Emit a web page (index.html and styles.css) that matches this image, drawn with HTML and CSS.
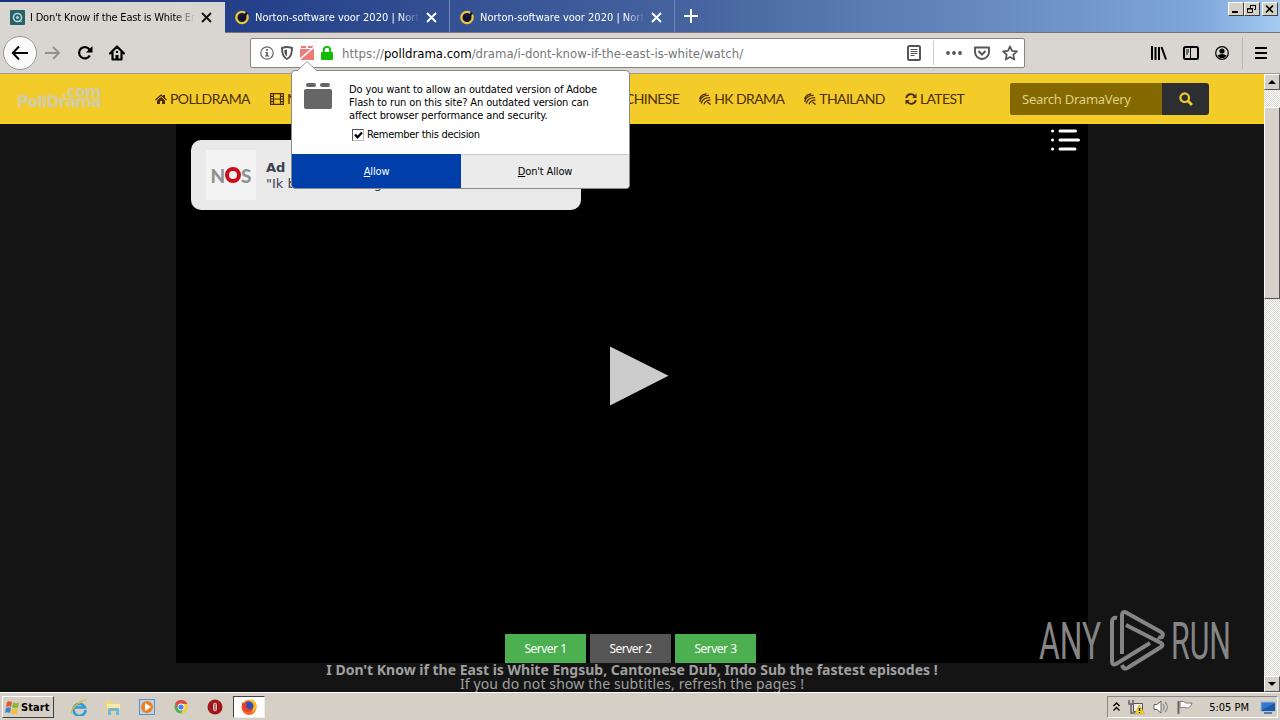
FILE: index.html
```html
<!DOCTYPE html>
<html lang="en">
<head>
    <meta charset="UTF-8">
    <meta name="viewport" content="width=device-width, initial-scale=1.0">
    <title>I Don't Know if the East is White</title>
    <link rel="stylesheet" href="styles.css">
</head>
<body>
    <div class="tabs">
        <div class="tab active">
            <svg class="favicon" width="15" height="15" viewBox="0 0 15 15"><rect width="15" height="15" rx="1" fill="#285f68"/><circle cx="7.5" cy="7.5" r="4" fill="none" stroke="#b5dadd" stroke-width="1.6"/><circle cx="7.5" cy="7.5" r="1.5" fill="#b5dadd"/><path d="M9 10l3 2" stroke="#b5dadd"/></svg>
            <span class="tab-title">I Don't Know if the East is White Engsub</span>
            <svg class="close" width="11" height="11" viewBox="0 0 11 11"><path d="M1 1l9 9M10 1l-9 9" stroke="#111" stroke-width="1.9"/></svg>
        </div>
        <div class="tab">
            <svg class="favicon" width="16" height="16" viewBox="0 0 16 16"><circle cx="8" cy="8.500" r="5.700" fill="#14193a" stroke="#e9c63a" stroke-width="2.300"/><path d="M5 7l3 4 5-7.500" fill="none" stroke="#10132b" stroke-width="2.300"/></svg>
            <span class="tab-title">Norton-software voor 2020 | Norton</span>
            <svg class="close" width="11" height="11" viewBox="0 0 11 11"><path d="M1 1l9 9M10 1l-9 9" stroke="#fff" stroke-width="1.9"/></svg>
        </div>
        <div class="tab">
            <svg class="favicon" width="16" height="16" viewBox="0 0 16 16"><circle cx="8" cy="8.500" r="5.700" fill="#14193a" stroke="#e9c63a" stroke-width="2.300"/><path d="M5 7l3 4 5-7.500" fill="none" stroke="#10132b" stroke-width="2.300"/></svg>
            <span class="tab-title">Norton-software voor 2020 | Norton</span>
            <svg class="close" width="11" height="11" viewBox="0 0 11 11"><path d="M1 1l9 9M10 1l-9 9" stroke="#fff" stroke-width="1.9"/></svg>
        </div>
        <svg class="new-tab" width="14" height="14" viewBox="0 0 14 14"><path d="M7 0v14M0 7h14" stroke="#fff" stroke-width="2"/></svg>
        <div class="window-buttons">
            <span class="win-btn"><svg width="12" height="10" viewBox="0 0 12 10"><path d="M2 8h6" stroke="#000" stroke-width="2"/></svg></span>
            <span class="win-btn"><svg width="12" height="10" viewBox="0 0 12 10"><path d="M4.500 4V1.500h5v4H8M4 1.500h6M1.500 4.500h5v4h-5zM1 5h6" fill="none" stroke="#000"/></svg></span>
            <span class="win-btn last"><svg width="12" height="10" viewBox="0 0 12 10"><path d="M2 1.500l7 7M9 1.500l-7 7" stroke="#000" stroke-width="1.600"/></svg></span>
        </div>
    </div>

    <div class="toolbar">
        <span class="back"><svg width="18" height="16" viewBox="0 0 18 16"><path d="M17 8H2M8 1.500L1.800 8 8 14.500" fill="none" stroke="#000" stroke-width="2"/></svg></span>
        <svg class="forward" width="16" height="14" viewBox="0 0 16 14"><path d="M0 7h14M8 1l6 6-6 6" fill="none" stroke="#929190" stroke-width="1.800"/></svg>
        <svg class="reload" width="16" height="16" viewBox="0 0 16 16"><path d="M12.800 10.500A5.700 5.700 0 1 1 12.500 4.500" fill="none" stroke="#000" stroke-width="2.200"/><path d="M15.500 1v6.500H9z"/></svg>
        <svg class="home" width="16" height="16" viewBox="0 0 16 16"><path d="M1 8.500L8 1.500l7 7M3.500 7.500v7h9v-7" fill="none" stroke="#000" stroke-width="2.200" stroke-linejoin="round" stroke-linecap="round"/><path d="M6.500 14v-4h3v4M7 6h2v2H7z"/></svg>
        <div class="urlbar">
            <svg width="14" height="14" viewBox="0 0 14 14"><circle cx="7" cy="7" r="6.200" fill="none" stroke="#666" stroke-width="1.200"/><path d="M6.200 3h1.700v1.700H6.200zM5.300 6h2.500v3.500H9v1H5v-1h1.200V7h-.9z" fill="#555"/></svg>
            <svg width="14" height="14" viewBox="0 0 14 14"><path d="M7 1c-2 0-3.500.5-5 1 0 5 .5 9 5 11 4.500-2 5-6 5-11-1.500-.5-3-1-5-1z" fill="none" stroke="#555" stroke-width="1.900"/><path d="M7 3.500c-1 0-2 .2-2.700.500 0 3 .4 5 2.700 6.500z" fill="#555"/></svg>
            <svg width="14" height="14" viewBox="0 0 14 14"><path d="M1 0h5v2H1zM8 0h5v2H8zM0 3h14v11H0z" fill="#ee7a78"/><path d="M-1 14L14 1" stroke="#fff" stroke-width="1.600"/></svg>
            <svg width="14" height="14" viewBox="0 0 14 14"><path d="M3.800 7V4a3.200 3.200 0 0 1 6.400 0v3" fill="none" stroke="#12bc00" stroke-width="2"/><rect x="1" y="6" width="12" height="8" rx="1" fill="#12bc00"/></svg>
            <span class="url">https://<b>polldrama.com</b>/drama/i-dont-know-if-the-east-is-white/watch/</span>
            <div class="url-actions">
                <svg width="14" height="16" viewBox="0 0 14 16"><rect x="1" y="1" width="12" height="14" rx="1.500" fill="none" stroke="#555" stroke-width="2"/><path d="M3.500 4.500h7M3.500 6.500h7M3.500 8.500h7M3.500 10.500h4" stroke="#555"/></svg>
                <span class="url-divider"></span>
                <svg width="16" height="4" viewBox="0 0 16 4"><circle cx="2" cy="2" r="1.900" fill="#555"/><circle cx="8" cy="2" r="1.900" fill="#555"/><circle cx="14" cy="2" r="1.900" fill="#555"/></svg>
                <svg width="16" height="14" viewBox="0 0 16 14"><path d="M1 1.500h14v4.500a7 7 0 0 1-14 0z" fill="none" stroke="#555" stroke-width="1.900" stroke-linejoin="round"/><path d="M4.500 5L8 8.500 11.500 5" fill="none" stroke="#555" stroke-width="2"/></svg>
                <svg width="16" height="16" viewBox="0 0 16 16"><path d="M8 1.300l2 4.500 5 .5-3.700 3.400 1 4.900L8 12.100l-4.300 2.500 1-4.900L1 6.300l5-.5z" fill="none" stroke="#555" stroke-width="1.700" stroke-linejoin="round"/></svg>
            </div>
        </div>
        <div class="toolbar-right">
            <svg width="16" height="14" viewBox="0 0 16 14"><path d="M1 0v14M4.500 1v13M8 1v13M10.500 1L15 13.500" stroke="#000" stroke-width="2"/></svg>
            <svg width="16" height="14" viewBox="0 0 16 14"><rect x="1" y="1" width="14" height="12" rx="1.500" fill="none" stroke="#000" stroke-width="2"/><path d="M7.500 1v12" stroke="#000"/><path d="M3 4h3M3 6h3M3 8h2" stroke="#000"/></svg>
            <svg width="14" height="14" viewBox="0 0 14 14"><circle cx="7" cy="7" r="6.300" fill="none" stroke="#000" stroke-width="1.200"/><circle cx="7" cy="5" r="2.600"/><path d="M2.500 9.500c3-2 6-2 9 0-1.500 3.400-7.500 3.400-9 0z"/></svg>
            <span class="menu-divider"></span>
            <svg width="12" height="12" viewBox="0 0 12 12"><path d="M0 1h12M0 6h12M0 11h12" stroke="#000" stroke-width="2"/></svg>
        </div>
    </div>

    <div class="viewport">
        <div class="page">
            <div class="navbar">
                <div class="logo"><span>.com</span><span>PollDrama</span></div>
                <div class="nav-links">
                    <a class="nav-link home-link"><svg width="12" height="12" viewBox="0 0 12 12"><path d="M0 6.500L6 1.200l2 1.800V2h2v2.800l2 1.700-.8.900L6 3 .8 7.400z"/><path d="M2 7.400L6 4l4 3.400V11H7V8H5v3H2z"/></svg>POLLDRAMA</a>
                    <a class="nav-link movie-link"><svg width="14" height="12" viewBox="0 0 14 12"><path d="M.6.600h12.800v10.800H.6zM3.500.600v10.800M10.500.600v10.800M3.500 6h7M.6 3.300h2.900M.6 6h2.900M.6 8.700h2.900M10.500 3.300h3M10.500 6h3M10.500 8.700h3" fill="none" stroke="#4b2d00" stroke-width="1.200"/></svg>M</a>
                    <a class="nav-link chinese-link">CHINESE</a>
                    <a class="nav-link"><svg width="12" height="12" viewBox="0 0 12 12"><path d="M.6 6C1.500 3 4 1 7.500.8M.7 8.800C1.500 5 5 2.300 9.800 2.400M2.200 10.500C3 7 6.500 4.700 11.200 4.700M5 11.400c.8-2.600 3.200-4.200 6.500-4.200M8.500 9l3 2.600" fill="none" stroke="#4b2d00" stroke-width="1.300"/></svg>HK DRAMA</a>
                    <a class="nav-link"><svg width="12" height="12" viewBox="0 0 12 12"><path d="M.6 6C1.500 3 4 1 7.500.8M.7 8.800C1.500 5 5 2.300 9.800 2.400M2.200 10.500C3 7 6.500 4.700 11.200 4.700M5 11.400c.8-2.600 3.200-4.200 6.500-4.200M8.500 9l3 2.600" fill="none" stroke="#4b2d00" stroke-width="1.300"/></svg>THAILAND</a>
                    <a class="nav-link"><svg width="12" height="12" viewBox="0 0 12 12"><path d="M1.200 5A4.800 4.800 0 0 1 9.800 3.200M10.800 7A4.800 4.800 0 0 1 2.200 8.800" fill="none" stroke="#4b2d00" stroke-width="1.900"/><path d="M11.500.5V5H7zM.5 11.500V7H5z"/></svg>LATEST</a>
                </div>
                <div class="search">
                    <div class="search-input">Search DramaVery</div>
                    <div class="search-button"><svg width="14" height="14" viewBox="0 0 14 14"><circle cx="5.700" cy="5.700" r="4.300" fill="none" stroke="#f4cc2a" stroke-width="2.200"/><path d="M9 9l4 4" stroke="#f4cc2a" stroke-width="2.600"/></svg></div>
                </div>
            </div>
            <div class="player">
                <div class="ad">
                    <div class="ad-logo"><span>N</span><i></i><span>S</span></div>
                    <div class="ad-text"><strong>Ad ·</strong><span>"Ik b<em>g</em></span></div>
                </div>
                <svg class="playlist" width="29" height="22" viewBox="0 0 29 22"><path d="M1.500 2h.1M1.500 11h.1M1.500 20h.1M9 2h15.500M9 11h18.500M9 20h15" stroke="#fff" stroke-width="3" stroke-linecap="round"/></svg>
                <svg class="play" width="60" height="60" viewBox="0 0 60 60"><path d="M1 .5L59.500 29.800 1 59.500z" fill="#ccc"/></svg>
                <div class="servers">
                    <span class="server">Server 1</span>
                    <span class="server current">Server 2</span>
                    <span class="server">Server 3</span>
                </div>
            </div>
            <div class="caption">
                <strong>I Don't Know if the East is White Engsub, Cantonese Dub, Indo Sub the fastest episodes !</strong>
                <span>If you do not show the subtitles, refresh the pages !</span>
            </div>
        </div>
        <div class="scrollbar">
            <div class="scroll-btn"><svg width="8" height="4" viewBox="0 0 8 4"><path d="M0 4l4-4 4 4z"/></svg></div>
            <div class="scroll-thumb"></div>
            <div class="scroll-btn down"><svg width="8" height="4" viewBox="0 0 8 4"><path d="M0 0l4 4 4-4z"/></svg></div>
        </div>
    </div>

    <div class="taskbar">
        <div class="start">
            <svg width="15" height="15" viewBox="0 0 15 15"><path d="M2 2c2-1 3-1 5 0L6 7C4 6 3 6 1 7z" fill="#e6592b"/><path d="M8 2.500c2 1 4 1 6 0L13 7.500c-2 1-4 1-6 0z" fill="#85b83c"/><path d="M1 8c2-1 3-1 5 0l-1 5c-2-1-3-1-5 0z" fill="#3e83cc"/><path d="M7 8.500c2 1 4 1 6 0l-1 5c-2 1-4 1-6 0z" fill="#f5bd35"/></svg>
            Start
        </div>
        <div class="quick">
            <svg width="18" height="18" viewBox="0 0 18 18"><path d="M15.500 12A6 6 0 1 1 15 9.500H5" fill="none" stroke="#2e9dda" stroke-width="2.600"/><path d="M2 15C0 12 9 3 16 2" fill="none" stroke="#dfb740" stroke-width="1.500"/></svg>
            <svg width="18" height="18" viewBox="0 0 18 18"><path d="M2 3h5l1 2h7v10H2z" fill="#f2d675"/><path d="M3 6h13v5H3z" fill="#f8e9a5"/><path d="M4 10h11v7h-3v-4H7v4H4z" fill="#6eb7dd"/></svg>
            <svg width="18" height="18" viewBox="0 0 18 18"><rect x="1.500" y="1.500" width="15" height="15" fill="#b9d5ed" stroke="#5c91c3"/><circle cx="9" cy="9" r="6" fill="#ef7f18"/><path d="M7 5v8l6-4z" fill="#fff"/></svg>
            <svg width="18" height="18" viewBox="0 0 18 18"><circle cx="9" cy="9" r="6.500" fill="#4caf50"/><path d="M3 5.500A7 7 0 0 1 15.500 6H9L6 10z" fill="#dd4b3e"/><path d="M15.500 6A7 7 0 0 1 9 15.500l3-6-2-3.500z" fill="#f7ce3e"/><circle cx="9" cy="9" r="3.400" fill="#fff"/><circle cx="9" cy="9" r="2.600" fill="#4285e8"/></svg>
            <svg width="18" height="18" viewBox="0 0 18 18"><circle cx="9" cy="9" r="7.500" fill="#a7151b"/><ellipse cx="9" cy="9" rx="2.500" ry="5" fill="#e8d5d2" stroke="#6d0d10"/><path d="M9 5.500v7" stroke="#991319"/></svg>
        </div>
        <div class="task-active">
            <svg width="18" height="18" viewBox="0 0 18 18"><circle cx="9" cy="9.500" r="7.500" fill="#f26b21"/><path d="M9 2c5-2 8 3 7.500 7-.5 3-3 5-5 5.500 2-3 1-5-1-6z" fill="#ffbd28"/><circle cx="9" cy="8" r="4.500" fill="#344fb0"/><path d="M2 4c1 2 3 2 5 2L6 8c1 3 4 4 7 3-2 5-10 4-11-2z" fill="#e8442b"/></svg>
        </div>
        <div class="tray">
            <svg width="7" height="10" viewBox="0 0 7 10"><path d="M.5 4l3-3 3 3M.5 8.500l3-3 3 3" fill="none" stroke="#000" stroke-width="1.400"/></svg>
            <svg width="17" height="16" viewBox="0 0 17 16"><path d="M5.500 4.500h9v8h-9z" fill="#eee" stroke="#555"/><path d="M1 1v4h4V1M3 5v9h5" fill="none" stroke="#666" stroke-width="1.500"/><path d="M11.500 6l5 9h-10z" fill="#f4d321" stroke="#b79a14" stroke-width=".5"/><path d="M11.500 9v3M11.500 13v1" stroke="#222" stroke-width="1.400"/></svg>
            <svg width="16" height="14" viewBox="0 0 16 14"><path d="M1 4.500h3l4-3.500v12L4 9.500H1z" fill="#fff" stroke="#666"/><path d="M10 4c1.500 2 1.500 4 0 6M12 2c3 3 3 7 0 10" fill="none" stroke="#888" stroke-width="1.200"/></svg>
            <svg width="16" height="14" viewBox="0 0 16 14"><path d="M1.500 1v13" stroke="#666" stroke-width="2"/><path d="M3 1.500c3-.5 4 0 6 1.500h6c-1 3-2 5-6 5-2-1-4-1-6 0z" fill="#fff" stroke="#777"/></svg>
            <span class="clock">5:05 PM</span>
            <svg width="16" height="13" viewBox="0 0 16 13"><rect x="1" y="1" width="14" height="9" fill="#3379ca" stroke="#94b7db"/><path d="M1.500 9L15 2v8H2z" fill="#1b58aa"/><path d="M4 12h8" stroke="#305e95" stroke-width="1.500"/></svg>
        </div>
    </div>

    <div class="popup">
        <svg class="popup-arrow" width="20" height="11" viewBox="0 0 20 11"><path d="M0 10.500L10 .8l10 9.700z" fill="#fff"/><path d="M0 10l10-9.500L20 10" fill="none" stroke="#999"/></svg>
        <div class="popup-body">
            <svg width="28" height="27" viewBox="0 0 28 27"><rect x="2" y="0" width="10" height="4" rx="2" fill="#666"/><rect x="16" y="0" width="10" height="4" rx="2" fill="#666"/><rect y="6" width="28" height="20" rx="2" fill="#666"/></svg>
            <div class="popup-text">
                <p>Do you want to allow an outdated version of Adobe<br>Flash to run on this site? An outdated version can<br>affect browser performance and security.</p>
                <div class="remember"><span class="checkbox"><svg width="9" height="9" viewBox="0 0 9 9"><path d="M1 3.500l2.500 2.800L8 1.500" fill="none" stroke="#000" stroke-width="2.200"/></svg></span>Remember this decision</div>
            </div>
        </div>
        <div class="popup-buttons">
            <span class="allow"><u>A</u>llow</span>
            <span class="deny"><u>D</u>on't Allow</span>
        </div>
    </div>

    <svg class="watermark" width="194" height="64" viewBox="0 0 194 64">
        <text x="1" y="50" textLength="62" lengthAdjust="spacingAndGlyphs">ANY</text>
        <text x="133" y="50" textLength="60" lengthAdjust="spacingAndGlyphs">RUN</text>
        <path d="M79 9q-5-1-5 4v39q0 5 4 3l34-21M84 45V7q0-6 5-3l34 19q3 2 1 5-2 1-4 0M88 16l35 18q3 2 0 4L91 58q-5 4-7-2"/>
    </svg>
</body>
</html>
```
FILE: styles.css
```css
* {
    box-sizing: border-box;
}
body {
    margin: 0;
    width: 1280px;
    height: 720px;
    overflow: hidden;
    position: relative;
    display: flex;
    flex-direction: column;
    font-family: "DejaVu Sans Condensed", "DejaVu Sans", sans-serif;
    font-size: 11px;
    color: #000;
    background-color: #d9d6d1;
}
svg {
    display: block;
    flex: none;
}
/* Tab strip */
.tabs {
    height: 33px;
    display: flex;
    flex: none;
    background: linear-gradient(90deg, #16317c 0, #233f88 230px, #45649f 690px, #6f92c8 1050px, #7fa7db 1200px, #a5cbf1 1280px);
    border-bottom: 1px solid #77777a;
}
.tab {
    width: 225px;
    height: 32px;
    padding: 2px 12px 0 9px;
    display: flex;
    align-items: center;
    color: #fff;
    border-right: 1px solid #7189b8;
}
.tab.active {
    height: 31px;
    margin-top: 2px;
    padding: 0 13px 1px 9px;
    color: #000;
    background-color: #d9d6d1;
    border-right: none;
    letter-spacing: -0.21px;
}
.favicon {
    margin: 0 5px 0 1px;
}
.tab:not(.active) .favicon {
    margin: 0 5px 0 0;
}
.tab-title {
    width: 165px;
    overflow: hidden;
    white-space: nowrap;
    mask-image: linear-gradient(90deg, #000 88%, transparent);
}
.close {
    margin-left: auto;
}
.new-tab {
    margin: 9px 0 0 9px;
}
.window-buttons {
    display: flex;
    margin: 2px 2px 0 auto;
}
.win-btn {
    width: 16px;
    height: 14px;
    padding: 1px;
    background-color: #d6d2ca;
    border: 1px solid;
    border-color: #fff #404040 #404040 #fff;
}
.win-btn.last {
    margin-left: 2px;
}
/* Toolbar */
.toolbar {
    height: 41px;
    flex: none;
    display: flex;
    align-items: center;
    padding-left: 3px;
    border-bottom: 1px solid #a29d92;
}
.back {
    width: 34px;
    height: 34px;
    border: 1px solid #999;
    border-radius: 50%;
    background-color: #fafafa;
    display: flex;
    align-items: center;
    justify-content: center;
}
.forward {
    margin-left: 8px;
}
.reload {
    margin-left: 16px;
}
.home {
    margin-left: 16px;
}
.urlbar {
    width: 775px;
    height: 30px;
    margin-left: 125px;
    padding: 0 6px 0 9px;
    border: 1px solid #88847c;
    border-radius: 2px;
    background-color: #fff;
    display: flex;
    align-items: center;
    gap: 6px;
}
.url {
    margin-left: 2px;
    font-size: 13px;
    color: #777;
    white-space: nowrap;
}
.url b {
    font-weight: normal;
    color: #000;
}
.url-actions {
    display: flex;
    align-items: center;
    gap: 12px;
    margin-left: auto;
}
.url-divider {
    width: 1px;
    height: 24px;
    background-color: #ccc;
}
.toolbar-right {
    display: flex;
    align-items: center;
    gap: 16px;
    margin: 0 13px 0 auto;
}
.menu-divider {
    width: 1px;
    height: 32px;
    background-color: #bbb7b0;
    margin: 0 -4px 0 -3px;
}
/* Web page */
.viewport {
    height: 618px;
    flex: none;
    display: flex;
}
.page {
    width: 1264px;
    background-color: #141414;
}
.navbar {
    height: 50px;
    display: flex;
    align-items: center;
    background-color: #f4cc2a;
    border-bottom: 1px solid #f5d319;
}
.logo {
    width: 85px;
    margin-left: 16px;
    padding-bottom: 3px;
    font: bold 16px/10px "DejaVu Sans", sans-serif;
    color: #d2cba8;
    display: flex;
    flex-direction: column;
    align-items: flex-end;
    letter-spacing: -1px;
}
.nav-links {
    display: flex;
    margin-left: 54px;
}
.nav-link {
    display: flex;
    align-items: center;
    gap: 3px;
    margin-right: 20px;
    font-family: Lato, sans-serif;
    font-size: 14px;
    letter-spacing: -0.6px;
    color: #4b2d00;
    fill: #4b2d00;
    white-space: nowrap;
}
.movie-link {
    width: 355px;
    margin-right: 0;
}
.search {
    display: flex;
    height: 32px;
    margin: 0 55px 0 auto;
}
.search-input {
    width: 152px;
    padding: 0 12px;
    font: 13px/33px "Noto Sans", sans-serif;
    letter-spacing: -0.25px;
    color: #e1cf86;
    background-color: #846900;
    border-radius: 2px 0 0 2px;
    white-space: nowrap;
}
.search-button {
    width: 47px;
    display: flex;
    align-items: center;
    justify-content: center;
    background-color: #2c2e32;
    border-radius: 0 3px 3px 0;
}
.player {
    position: relative;
    width: 912px;
    height: 539px;
    margin-left: 176px;
    display: flex;
    align-items: flex-end;
    justify-content: center;
    background-color: #000;
}
.ad {
    position: absolute;
    left: 15px;
    top: 16px;
    width: 390px;
    height: 70px;
    padding: 10px 15px;
    display: flex;
    gap: 10px;
    background-color: #e9e9e9;
    border-radius: 10px;
}
.ad-logo {
    width: 50px;
    height: 50px;
    display: flex;
    align-items: center;
    justify-content: center;
    background-color: #f3f3f3;
    font: 900 19px Lato, sans-serif;
    color: #929292;
}
.ad-logo i {
    width: 16px;
    height: 16px;
    border: 4px solid #c90d19;
    border-radius: 50%;
}
.ad-text {
    display: flex;
    flex-direction: column;
    padding-top: 10px;
    font: 13px/16px "DejaVu Sans", sans-serif;
    color: #3c4050;
    white-space: nowrap;
}
.ad-text em {
    margin-left: 78px;
    font-style: normal;
}
.playlist {
    position: absolute;
    right: 8px;
    top: 5px;
}
.play {
    position: absolute;
    left: 433px;
    top: 222px;
}
.servers {
    display: flex;
    gap: 4px;
    margin-right: 3px;
}
.server {
    width: 81px;
    height: 29px;
    font: 12px/30px "Noto Sans", sans-serif;
    letter-spacing: -0.5px;
    text-align: center;
    color: #fff;
    background-color: #4caf50;
}
.server.current {
    background-color: #555;
}
.caption {
    display: flex;
    flex-direction: column;
    align-items: center;
    font: 14px/14px "Noto Sans", sans-serif;
    color: #a0a0a0;
    white-space: nowrap;
}
.caption span {
    letter-spacing: 0.13px;
}
/* Classic scrollbar */
.scrollbar {
    width: 16px;
    display: flex;
    flex-direction: column;
    background: repeating-conic-gradient(#fff 0 25%, #d9d6d1 0 50%) 0 0 / 2px 2px;
}
.scroll-btn {
    height: 16px;
    display: flex;
    align-items: center;
    justify-content: center;
    background-color: #d6d2ca;
    border: 1px solid;
    border-color: #fff #555 #555 #fff;
}
.scroll-thumb {
    height: 192px;
    margin-top: 17px;
    background-color: #d6d2ca;
    border: 1px solid;
    border-color: #fff #555 #555 #fff;
}
.scroll-btn.down {
    margin-top: auto;
}
/* Taskbar */
.taskbar {
    height: 28px;
    flex: none;
    display: flex;
    align-items: center;
    padding: 1px 2px 0;
    background-color: #d5cfc5;
    border-top: 1px solid #fff;
}
.start {
    width: 52px;
    height: 22px;
    padding-left: 2px;
    display: flex;
    align-items: center;
    gap: 1px;
    font-weight: bold;
    letter-spacing: 0.1px;
    border: 1px solid;
    border-color: #fff #404040 #404040 #fff;
}
.quick {
    display: flex;
    gap: 16px;
    margin-left: 16px;
}
.task-active {
    width: 32px;
    height: 22px;
    margin-left: 9px;
    display: flex;
    align-items: center;
    justify-content: center;
    background-color: #fff;
    border: 1px solid;
    border-color: #404040 #eee #eee #404040;
}
.tray {
    height: 22px;
    margin-left: auto;
    padding: 0 1px 0 5px;
    display: flex;
    align-items: center;
    gap: 8px;
    border: 1px solid;
    border-color: #888 #fff #fff #888;
}
.clock {
    margin: 0 3px 0 8px;
    white-space: nowrap;
}
/* Plugin permission popup */
.popup {
    position: absolute;
    left: 291px;
    top: 70px;
    width: 339px;
    height: 119px;
    background-color: #fff;
    border: 1px solid #8a8a8a;
    border-radius: 4px;
}
.popup-arrow {
    position: absolute;
    left: 5px;
    top: -10px;
}
.popup-body {
    height: 83px;
    padding: 12px 12px 0;
    display: flex;
    gap: 17px;
    white-space: nowrap;
}
.popup-text p {
    margin: 0;
    line-height: 13px;
    letter-spacing: -0.13px;
}
.remember {
    display: flex;
    align-items: center;
    gap: 3px;
    margin: 6px 0 0 3px;
    line-height: 14px;
    letter-spacing: -0.3px;
}
.checkbox {
    width: 12px;
    height: 12px;
    padding: 1px;
    border: 1px solid;
    border-color: #555 #bbb #bbb #555;
}
.popup-buttons {
    display: flex;
    height: 34px;
    line-height: 34px;
    text-align: center;
    letter-spacing: -0.15px;
}
.allow {
    width: 169px;
    padding-top: 1px;
    color: #fff;
    background-color: #003eaa;
    border-radius: 0 0 0 3px;
}
.deny {
    flex: 1;
    background-color: #ebebeb;
    border-top: 1px solid #ccc;
    border-radius: 0 0 3px 0;
}
.watermark {
    position: absolute;
    left: 1038px;
    top: 609px;
    font: 400 52px Roboto, sans-serif;
    fill: #858585;
}
.watermark path {
    fill: none;
    stroke: #858585;
    stroke-width: 4px;
}
```
